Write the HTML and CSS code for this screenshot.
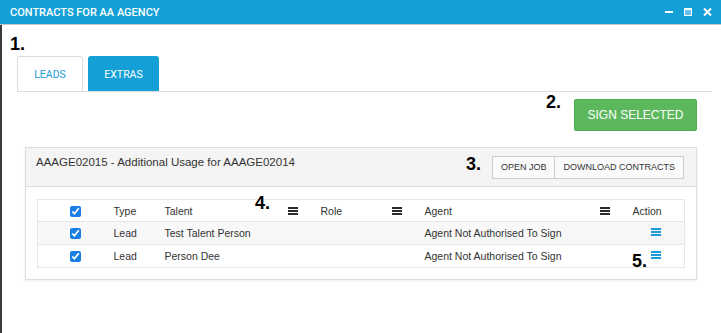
FILE: index.html
```html
<!DOCTYPE html>
<html>
<head>
    <title>Contracts for AA Agency</title>
    <link rel="stylesheet" href="styles.css">
</head>
<body>
    <div class="titlebar">
        <span class="title">CONTRACTS FOR AA AGENCY</span>
        <div class="win-controls">
            <svg width="8" height="8" viewBox="0 0 8 8"><rect x="0" y="3" width="8" height="2" fill="#fff"/></svg>
            <svg width="8" height="8" viewBox="0 0 8 8"><rect x="0.5" y="0.5" width="7" height="7" fill="rgba(255,255,255,0.35)" stroke="#fff"/><rect x="0" y="0" width="8" height="2" fill="#fff"/></svg>
            <svg width="9" height="8" viewBox="0 0 9 8"><path d="M1 0.5 L8 7.5 M8 0.5 L1 7.5" stroke="#fff" stroke-width="2"/></svg>
        </div>
    </div>

    <div class="content">
        <ul class="tabs">
            <li class="tab">LEADS</li>
            <li class="tab active">EXTRAS</li>
        </ul>

        <div class="tab-content">
            <div class="toolbar">
                <button class="btn-sign">SIGN SELECTED</button>
            </div>

            <div class="panel">
                <div class="panel-heading">
                    <span class="panel-title">AAAGE02015 - Additional Usage for AAAGE02014</span>
                    <div class="btn-group">
                        <button class="btn-default">OPEN JOB</button>
                        <button class="btn-default">DOWNLOAD CONTRACTS</button>
                    </div>
                </div>
                <div class="panel-body">
                    <table class="grid">
                        <colgroup>
                            <col style="width: 76px">
                            <col style="width: 51px">
                            <col style="width: 156px">
                            <col style="width: 104px">
                            <col style="width: 208px">
                            <col style="width: 52px">
                        </colgroup>
                        <thead>
                            <tr>
                                <th class="col-check"><input type="checkbox" checked></th>
                                <th>Type</th>
                                <th><div class="th-menu">Talent <svg class="menu-icon" width="10" height="8" viewBox="0 0 10 8"><rect y="0" width="10" height="2"/><rect y="3" width="10" height="2"/><rect y="6" width="10" height="2"/></svg></div></th>
                                <th><div class="th-menu">Role <svg class="menu-icon" width="10" height="8" viewBox="0 0 10 8"><rect y="0" width="10" height="2"/><rect y="3" width="10" height="2"/><rect y="6" width="10" height="2"/></svg></div></th>
                                <th><div class="th-menu">Agent <svg class="menu-icon" width="10" height="8" viewBox="0 0 10 8"><rect y="0" width="10" height="2"/><rect y="3" width="10" height="2"/><rect y="6" width="10" height="2"/></svg></div></th>
                                <th class="col-action">Action</th>
                            </tr>
                        </thead>
                        <tbody>
                            <tr>
                                <td class="col-check"><input type="checkbox" checked></td>
                                <td>Lead</td>
                                <td>Test Talent Person</td>
                                <td></td>
                                <td>Agent Not Authorised To Sign</td>
                                <td class="col-action"><svg class="action-icon" width="10" height="8" viewBox="0 0 10 8"><rect y="0" width="10" height="2"/><rect y="3" width="10" height="2"/><rect y="6" width="10" height="2"/></svg></td>
                            </tr>
                            <tr>
                                <td class="col-check"><input type="checkbox" checked></td>
                                <td>Lead</td>
                                <td>Person Dee</td>
                                <td></td>
                                <td>Agent Not Authorised To Sign</td>
                                <td class="col-action"><svg class="action-icon" width="10" height="8" viewBox="0 0 10 8"><rect y="0" width="10" height="2"/><rect y="3" width="10" height="2"/><rect y="6" width="10" height="2"/></svg></td>
                            </tr>
                        </tbody>
                    </table>
                </div>
            </div>
        </div>
    </div>

    <!-- numbered callouts drawn over the screen -->
    <span class="marker marker-1">1.</span>
    <span class="marker marker-2">2.</span>
    <span class="marker marker-3">3.</span>
    <span class="marker marker-4">4.</span>
    <span class="marker marker-5">5.</span>
</body>
</html>
```

FILE: styles.css
```css
body {
    margin: 0;
    font-family: "Liberation Sans", Arial, sans-serif;
    color: #333;
    background-color: #fff;
    position: relative;
}

.titlebar {
    height: 24px;
    background-color: #149fd7;
    border-bottom: 1px solid #c7c7c7;
    display: flex;
    align-items: center;
    justify-content: space-between;
    padding: 0 9px 0 10px;
}

.title {
    font-family: Roboto, sans-serif;
    font-size: 11px;
    font-weight: 500;
    color: #fff;
}

.win-controls {
    display: flex;
    align-items: center;
    gap: 11px;
}

.win-controls svg {
    display: block;
}

.content {
    border-left: 2px solid #3a3a3a;
    padding: 31px 9px 0 15px;
    min-height: 277px;
}

.tabs {
    list-style: none;
    margin: 0;
    padding: 0;
    display: flex;
    gap: 5px;
    border-bottom: 1px solid #ddd;
}

.tab {
    height: 35px;
    box-sizing: border-box;
    display: flex;
    align-items: center;
    justify-content: center;
    font-family: Roboto, sans-serif;
    font-size: 10.5px;
    color: #1e9bd7;
    border: 1px solid #ddd;
    border-bottom: none;
    border-radius: 3px 3px 0 0;
    width: 66px;
}

.tab.active {
    width: 71px;
    background-color: #149fd7;
    border-color: #149fd7;
    color: #fff;
}

.tab-content {
    padding: 0 15px 0 8px;
}

.toolbar {
    display: flex;
    justify-content: flex-end;
    margin-top: 7px;
}

.btn-sign {
    width: 123px;
    height: 32px;
    background-color: #5cb85c;
    border: 1px solid #4cae4c;
    border-radius: 2px;
    color: #fff;
    font-family: "Liberation Sans", Arial, sans-serif;
    font-size: 12px;
    padding: 0;
}

.panel {
    margin-top: 16px;
    border: 1px solid #ddd;
    box-shadow: 0 1px 2px rgba(0, 0, 0, 0.08);
}

.panel-heading {
    height: 38px;
    background-color: #f4f4f4;
    border-bottom: 1px solid #ddd;
    display: flex;
    align-items: center;
    justify-content: space-between;
    padding: 0 12px 0 10px;
}

.panel-title {
    font-size: 11.5px;
    color: #333;
    margin-top: -11px;
}

.btn-group {
    display: flex;
}

.btn-default {
    height: 23px;
    padding: 0 8px;
    background-color: #fafafa;
    border: 1px solid #ccc;
    color: #333;
    font-family: "Liberation Sans", Arial, sans-serif;
    font-size: 9px;
}

.btn-default + .btn-default {
    margin-left: -1px;
}

.panel-body {
    padding: 12px 12px 11px 11px;
}

.grid {
    width: 647px;
    table-layout: fixed;
    border-collapse: collapse;
    border: 1px solid #e6e6e6;
    font-size: 10.5px;
    color: #333;
}

.grid th,
.grid td {
    padding: 0;
    text-align: left;
    font-weight: normal;
    border-top: 1px solid #e6e6e6;
}

.grid thead tr {
    height: 22px;
}

.grid tbody tr {
    height: 23px;
}

.grid tbody tr:nth-child(odd) {
    background-color: #f8f8f8;
}

.grid .col-check {
    text-align: center;
}

.grid input[type="checkbox"] {
    width: 11px;
    height: 11px;
    margin: 0;
    vertical-align: middle;
    accent-color: #1a7fe4;
}

.grid .col-action {
    text-align: right;
    padding-right: 23px;
}

.th-menu {
    display: flex;
    align-items: center;
    justify-content: space-between;
    padding-right: 23px;
}

.menu-icon {
    fill: #2b2b2b;
}

.action-icon {
    fill: #1e9ad6;
    vertical-align: middle;
    margin-top: -4px;
}

.marker {
    position: absolute;
    font-family: "Liberation Sans", Arial, sans-serif;
    font-size: 18px;
    line-height: 18px;
    font-weight: bold;
    color: #000;
}

.marker-1 { left: 10px; top: 35px; }
.marker-2 { left: 546px; top: 93px; }
.marker-3 { left: 466px; top: 155px; }
.marker-4 { left: 255px; top: 194px; }
.marker-5 { left: 632px; top: 252px; }
```
